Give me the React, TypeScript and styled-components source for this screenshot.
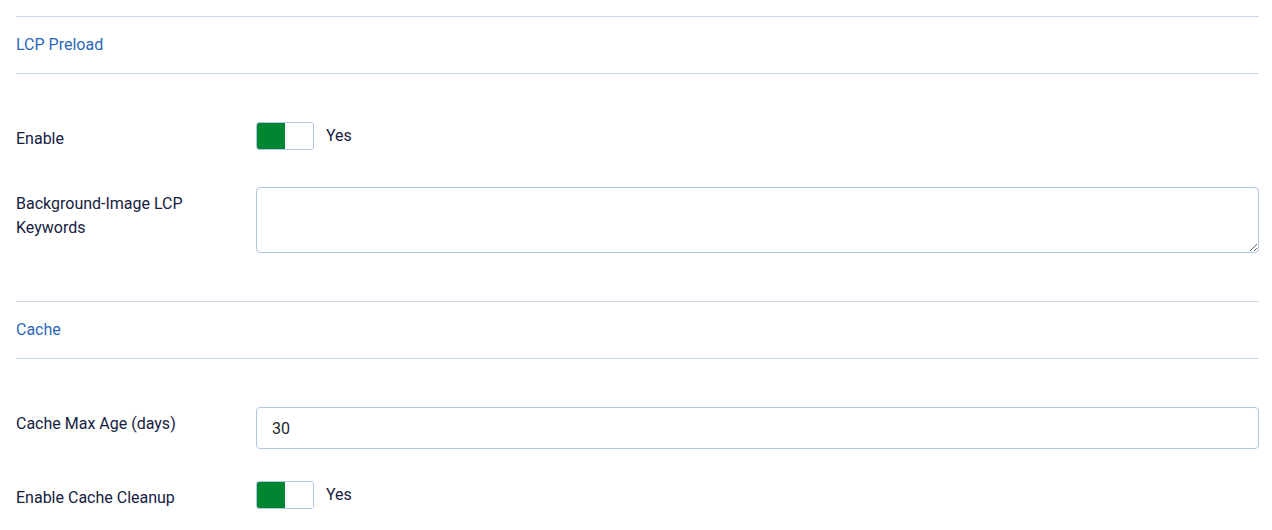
import styled, { createGlobalStyle } from "styled-components";

const GlobalStyle = createGlobalStyle`
  html, body {
    margin: 0;
    padding: 0;
    background: #ffffff;
  }
  body {
    font-family: Roboto, "Noto Sans", "Liberation Sans", sans-serif;
    font-size: 16px;
    color: #16213f;
  }
`;

type ToggleProps = {
  checked: boolean;
};

const Switcher = ({ checked }: ToggleProps) => (
  <SwitchWrapper>
    <SwitchTrack>
      <SwitchHalf $on={checked} />
      <SwitchHalf $on={false} />
    </SwitchTrack>
    <SwitchText>{checked ? "Yes" : "No"}</SwitchText>
  </SwitchWrapper>
);

const App = () => {
  return (
    <Page>
      <GlobalStyle />
      <Section>
        <Heading>LCP Preload</Heading>
        <Rows>
          <Row>
            <Label>Enable</Label>
            <Switcher checked />
          </Row>
          <Row>
            <Label>
              Background-Image LCP
              <br />
              Keywords
            </Label>
            <TextArea />
          </Row>
        </Rows>
      </Section>
      <Section>
        <Heading>Cache</Heading>
        <Rows>
          <Row>
            <Label>Cache Max Age (days)</Label>
            <TextInput defaultValue="30" />
          </Row>
          <Row>
            <Label>Enable Cache Cleanup</Label>
            <Switcher checked />
          </Row>
        </Rows>
      </Section>
    </Page>
  );
};

export default App;

const Page = styled.div`
  padding: 16px 13px 0 16px;
`;

const Section = styled.section`
  margin-bottom: 48px;
`;

const Heading = styled.div`
  border-top: 1px solid #c8d7ea;
  border-bottom: 1px solid #c8d7ea;
  padding: 16px 0;
  line-height: 24px;
  color: #2a69b8;
`;

const Rows = styled.div`
  margin-top: 48px;
  display: flex;
  flex-direction: column;
  gap: 32px;
`;

const Row = styled.div`
  display: grid;
  grid-template-columns: 240px 1fr;
  align-items: start;
`;

const Label = styled.label`
  padding-top: 5px;
  line-height: 24px;
  color: #16213f;
`;

const SwitchWrapper = styled.div`
  display: flex;
  align-items: flex-start;
  gap: 12px;
  min-height: 33px;
`;

const SwitchTrack = styled.div`
  display: flex;
  width: 58px;
  height: 28px;
  box-sizing: border-box;
  border: 1px solid #b4c7e1;
  border-radius: 3px;
  overflow: hidden;
`;

const SwitchHalf = styled.span<{ $on: boolean }>`
  flex: 1;
  background: ${({ $on }) => ($on ? "#008530" : "#ffffff")};
`;

const SwitchText = styled.span`
  line-height: 24px;
  padding-top: 2px;
  color: #16213f;
`;

const TextArea = styled.textarea`
  display: block;
  width: 100%;
  height: 66px;
  box-sizing: border-box;
  border: 1px solid #b4c7e1;
  border-radius: 4px;
  padding: 8px 16px;
  font-family: inherit;
  font-size: 16px;
  resize: vertical;
`;

const TextInput = styled.input`
  display: block;
  width: 100%;
  height: 42px;
  box-sizing: border-box;
  border: 1px solid #b4c7e1;
  border-radius: 4px;
  padding: 0 15px;
  font-family: inherit;
  font-size: 16px;
  color: #22262a;
`;
